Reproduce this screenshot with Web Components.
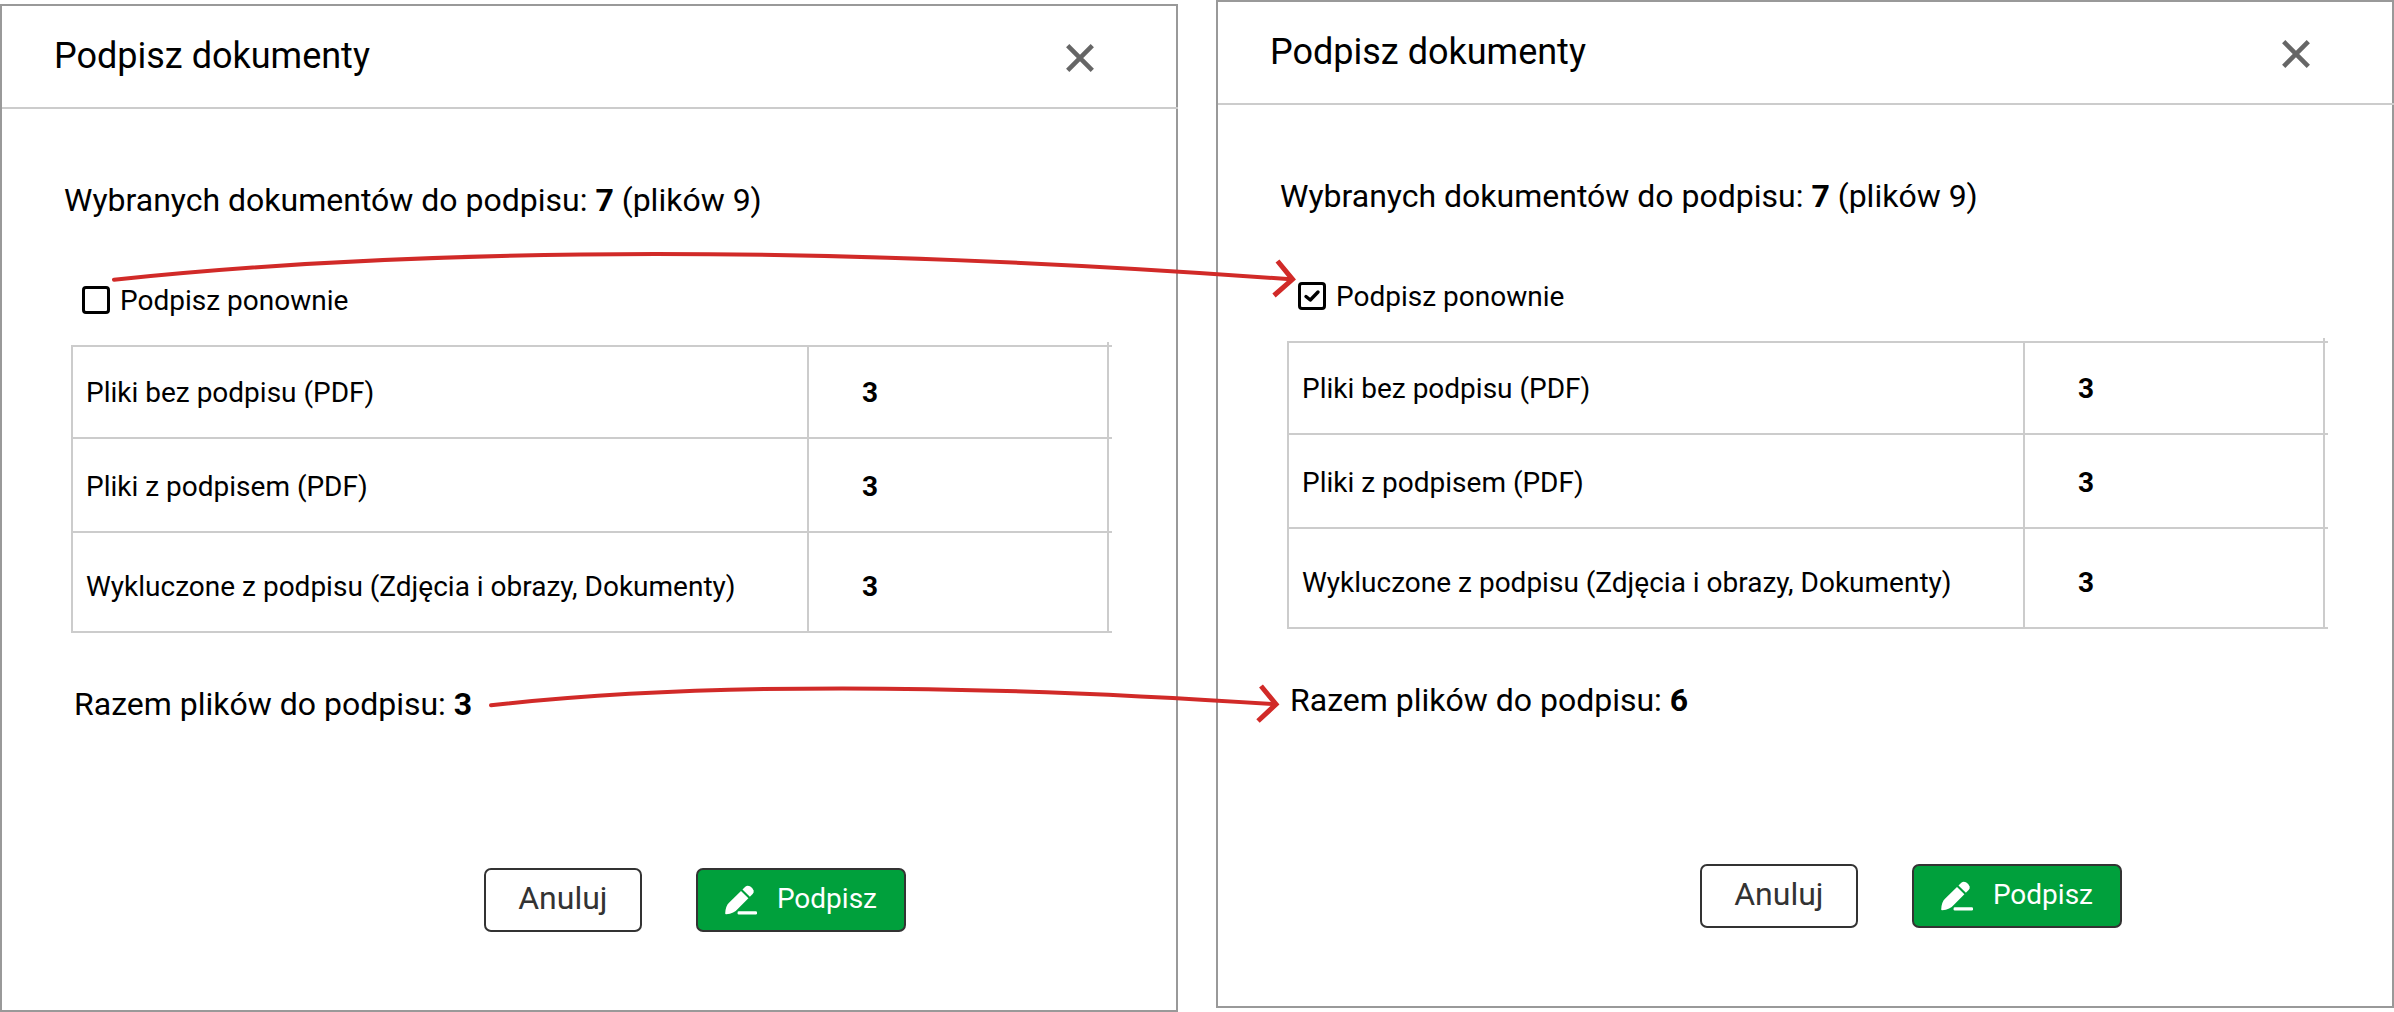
<!DOCTYPE html>
<html lang="pl">
<head>
<meta charset="utf-8">
<title>Podpisz dokumenty</title>
<style>
  body { margin: 0; background: #fff; color: #000; font-family: Roboto, "Liberation Sans", sans-serif; }
</style>
</head>
<body>
<sign-flow></sign-flow>

<template id="flow-tpl">
  <style>
    :host { display: grid; grid-template-columns: 1fr 1fr; gap: 38px; position: relative; align-items: start; }
    .before { margin-top: 4px; }
    flow-arrows { position: absolute; inset: 0; pointer-events: none; }
  </style>
  <sign-dialog class="before" total="3"></sign-dialog>
  <sign-dialog total="6" again></sign-dialog>
  <flow-arrows></flow-arrows>
</template>

<template id="dialog-tpl">
  <style>
    :host { display: block; border: 2px solid #999; background: #fff; }
    header { display: flex; justify-content: space-between; align-items: flex-end; padding: 26px 76px 27px 52px; margin-right: -2px; border-bottom: 2px solid #ccc; }
    h1 { margin: 0; font-size: 36px; line-height: 48px; font-weight: 400; }
    .close { width: 44px; height: 44px; padding: 8px; border: 0; background: none; box-sizing: border-box; }
    .close svg { display: block; }
    p { margin: 0; font-size: 32px; line-height: 40px; }
    .selected { padding: 71px 62px 64px; }
    .total { padding: 51px 72px 144px; }
    sign-check { margin: 0 80px 27px; }
    file-table { margin: 0 67px 0 69px; }
    footer { display: flex; justify-content: flex-end; gap: 54px; padding: 0 270px 78px 0; }
  </style>
  <header>
    <h1>Podpisz dokumenty</h1>
    <button class="close" type="button" aria-label="Zamknij"><svg width="28" height="28" viewBox="0 0 28 28" fill="none" stroke="#666" stroke-width="4.6"><path d="M1.7 1.7 26.3 26.3M26.3 1.7 1.7 26.3"/></svg></button>
  </header>
  <p class="selected">Wybranych dokumentów do podpisu: <b>7</b> (plików 9)</p>
  <sign-check>Podpisz ponownie</sign-check>
  <file-table></file-table>
  <p class="total">Razem plików do podpisu: <b id="total"></b></p>
  <footer>
    <action-button>Anuluj</action-button>
    <action-button primary>Podpisz</action-button>
  </footer>
</template>

<template id="check-tpl">
  <style>
    :host { display: block; }
    label { display: inline-flex; align-items: flex-start; gap: 10px; font-size: 28px; line-height: 34px; vertical-align: top; }
    .box { display: grid; width: 28px; height: 28px; margin-top: 2px; }
    .box > * { grid-area: 1 / 1; }
    input { appearance: none; box-sizing: border-box; width: 28px; height: 28px; margin: 0; border: 3px solid #000; border-radius: 4px; background: #fff; }
    svg { visibility: hidden; pointer-events: none; z-index: 1; }
    input:checked + svg { visibility: visible; }
  </style>
  <label><span class="box"><input type="checkbox"><svg width="28" height="28" viewBox="0 0 28 28" fill="none" stroke="#000" stroke-width="3.4" stroke-linecap="round" stroke-linejoin="round"><path d="M8 14.5 12.3 18 20 10"/></svg></span><slot></slot></label>
</template>

<template id="table-tpl">
  <style>
    :host { display: block; --line: #ccc; }
    table { position: relative; width: 100%; box-sizing: border-box; border: 2px solid var(--line); border-spacing: 0; font-size: 28px; line-height: 32px; }
    th, td { position: relative; box-sizing: border-box; padding: 0; text-align: left; vertical-align: middle; }
    th { font-weight: 400; padding-left: 13px; }
    td { width: 300px; padding-left: 53px; border-left: 2px solid var(--line); font-weight: 700; }
    tr:first-child > * { height: 90px; padding-top: 2px; }
    tr + tr > * { height: 94px; padding-top: 4px; border-top: 2px solid var(--line); }
    tr:last-child > * { height: 100px; padding-top: 10px; }
    /* the rules run slightly past the right edge of the grid */
    td::after { content: ""; position: absolute; right: -5px; top: -2px; width: 3px; height: 2px; background: var(--line); }
    table::before { content: ""; position: absolute; right: -2px; top: -5px; width: 2px; height: 3px; background: var(--line); }
    table::after { content: ""; position: absolute; right: -5px; bottom: -2px; width: 3px; height: 2px; background: var(--line); }
  </style>
  <table><tbody>
    <tr><th scope="row">Pliki bez podpisu (PDF)</th><td>3</td></tr>
    <tr><th scope="row">Pliki z podpisem (PDF)</th><td>3</td></tr>
    <tr><th scope="row">Wykluczone z podpisu (Zdjęcia i obrazy, Dokumenty)</th><td>3</td></tr>
  </tbody></table>
</template>

<template id="button-tpl">
  <style>
    :host { display: block; }
    button { display: flex; align-items: center; justify-content: center; gap: 20px; box-sizing: border-box; height: 64px; min-width: 158px; padding: 0 27px 4px; border: 2px solid #333; border-radius: 7px; background: #fff; color: #333; font: 400 32px/40px Roboto, "Liberation Sans", sans-serif; }
    svg { display: none; flex: none; }
    :host([primary]) button { min-width: 210px; padding-bottom: 2px; background: #00a03c; color: #fff; font-size: 28px; justify-content: flex-start; }
    :host([primary]) svg { display: block; }
  </style>
  <button type="button"><svg width="32" height="32" viewBox="0 0 32 32" fill="#fff"><path d="M16 7.9 23.4 15.2 13.2 25.6Q9 30.9 1.2 31.3Q.1 31.4 .2 30.2Q.6 23 4 19.8Z"/><path d="M17.5 6.4 20.3 3.7Q22.4 1.9 25 3.3Q27.6 4.8 28.6 7.4Q29.1 9.4 27.6 11L24.9 13.7Z"/><rect x="12.6" y="28.2" width="19.4" height="3.2" rx="1.2"/></svg><slot></slot></button>
</template>

<template id="arrows-tpl">
  <style>
    :host { display: block; }
    svg { display: block; width: 100%; height: 100%; }
  </style>
  <svg viewBox="0 0 2394 1012" preserveAspectRatio="none" fill="none" stroke="#d12a28" stroke-width="4" stroke-linecap="round" aria-hidden="true">
    <path d="M114 279.7Q604 228.5 1291 279.3"/>
    <path d="M1277.5 261 1292.5 279.3 1274 295.5" stroke-width="5" stroke-linecap="butt"/>
    <path d="M491 705.3Q790 672 1275 704.3"/>
    <path d="M1261 686 1276 704.3 1258 721" stroke-width="5" stroke-linecap="butt"/>
  </svg>
</template>

<script>
  class TemplateElement extends HTMLElement {
    constructor() {
      super();
      const tpl = document.getElementById(this.constructor.template);
      this.attachShadow({ mode: "open" }).append(document.importNode(tpl.content, true));
    }
  }
  class SignCheck extends TemplateElement {
    static template = "check-tpl";
    static observedAttributes = ["checked"];
    attributeChangedCallback() {
      this.shadowRoot.querySelector("input").checked = this.hasAttribute("checked");
    }
  }
  class FileTable extends TemplateElement { static template = "table-tpl"; }
  class ActionButton extends TemplateElement { static template = "button-tpl"; }
  class FlowArrows extends TemplateElement { static template = "arrows-tpl"; }
  class SignDialog extends TemplateElement {
    static template = "dialog-tpl";
    connectedCallback() {
      this.shadowRoot.getElementById("total").textContent = this.getAttribute("total");
      this.shadowRoot.querySelector("sign-check").toggleAttribute("checked", this.hasAttribute("again"));
    }
  }
  class SignFlow extends TemplateElement { static template = "flow-tpl"; }
  customElements.define("sign-check", SignCheck);
  customElements.define("file-table", FileTable);
  customElements.define("action-button", ActionButton);
  customElements.define("flow-arrows", FlowArrows);
  customElements.define("sign-dialog", SignDialog);
  customElements.define("sign-flow", SignFlow);
</script>
</body>
</html>
